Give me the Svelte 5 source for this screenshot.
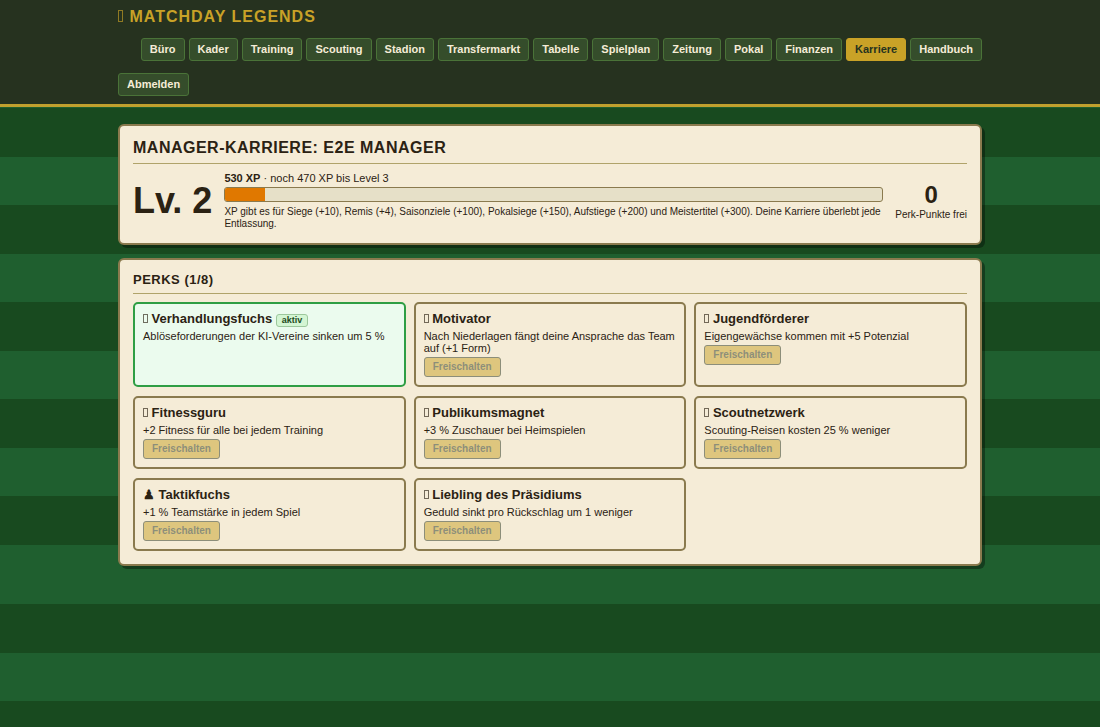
<script>
  const tabs = [
    'Büro', 'Kader', 'Training', 'Scouting', 'Stadion', 'Transfermarkt', 'Tabelle',
    'Spielplan', 'Zeitung', 'Pokal', 'Finanzen', 'Karriere', 'Handbuch'
  ];
  let active = $state('Karriere');

  const xp = { total: 530, missing: 470, next: 3, percent: 6 };

  const perks = [
    { name: 'Verhandlungsfuchs', text: 'Ablöseforderungen der KI-Vereine sinken um 5 %', owned: true },
    { name: 'Motivator', text: 'Nach Niederlagen fängt deine Ansprache das Team auf (+1 Form)' },
    { name: 'Jugendförderer', text: 'Eigengewächse kommen mit +5 Potenzial' },
    { name: 'Fitnessguru', text: '+2 Fitness für alle bei jedem Training' },
    { name: 'Publikumsmagnet', text: '+3 % Zuschauer bei Heimspielen' },
    { name: 'Scoutnetzwerk', text: 'Scouting-Reisen kosten 25 % weniger' },
    { icon: '♟', name: 'Taktikfuchs', text: '+1 % Teamstärke in jedem Spiel' },
    { name: 'Liebling des Präsidiums', text: 'Geduld sinkt pro Rückschlag um 1 weniger' }
  ];
</script>

<header>
  <div class="bar">
    <div class="brand"><span class="box" aria-hidden="true"></span> Matchday Legends</div>
    <nav>
      {#each tabs as tab}
        <button class="tab" class:active={tab === active} onclick={() => (active = tab)}>{tab}</button>
      {/each}
    </nav>
    <button class="tab">Abmelden</button>
  </div>
</header>

<main>
  <section class="card">
    <h1>Manager-Karriere: E2E Manager</h1>
    <div class="career">
      <div class="level">Lv. 2</div>
      <div class="progress">
        <div class="xp"><b>{xp.total} XP</b> · noch {xp.missing} XP bis Level {xp.next}</div>
        <div class="track"><div class="fill" style="width: {xp.percent}%"></div></div>
        <div class="small">
          XP gibt es für Siege (+10), Remis (+4), Saisonziele (+100), Pokalsiege (+150), Aufstiege (+200) und Meistertitel (+300). Deine Karriere überlebt jede Entlassung.
        </div>
      </div>
      <div class="points">
        <div class="count">0</div>
        <div class="small">Perk-Punkte frei</div>
      </div>
    </div>
  </section>

  <section class="card">
    <h2>Perks (1/8)</h2>
    <div class="perks">
      {#each perks as perk}
        <article class="perk" class:owned={perk.owned}>
          <h3>
            {#if perk.icon}{perk.icon}{:else}<span class="box" aria-hidden="true"></span>{/if}
            {perk.name}
            {#if perk.owned}<span class="badge">aktiv</span>{/if}
          </h3>
          <p>{perk.text}</p>
          {#if !perk.owned}
            <button class="unlock" disabled>Freischalten</button>
          {/if}
        </article>
      {/each}
    </div>
  </section>
</main>

<style>
  :global(body) {
    margin: 0;
    background: repeating-linear-gradient(0deg, #1f5f2f 0 48px, #184a1f 48px 97px);
    color: #2b2213;
    font: 11px/12px "Liberation Sans", Arial, sans-serif;
  }
  header {
    background: #26321f;
    border-bottom: 3px solid #c0a02e;
    padding: 8px 16px;
  }
  .bar {
    max-width: 864px;
    margin: 0 auto;
    display: flex;
    flex-wrap: wrap;
    align-items: center;
    gap: 12px;
  }
  .brand {
    color: #c9a227;
    font-size: 16px;
    line-height: 18px;
    font-weight: bold;
    letter-spacing: 1px;
    text-transform: uppercase;
  }
  .box {
    display: inline-block;
    box-sizing: border-box;
    width: 5px;
    height: 9px;
    border: 1px solid;
    opacity: 0.65;
  }
  .brand .box {
    height: 12px;
    margin-right: 1px;
  }
  nav {
    display: flex;
    flex-wrap: wrap;
    gap: 4px;
    margin-left: auto;
  }
  button {
    font-family: inherit;
    font-weight: bold;
    border-radius: 3px;
  }
  .tab {
    padding: 4px 8px;
    border: 1px solid #4a7338;
    background: #354d2b;
    color: #f5ecd7;
    font-size: 11px;
    line-height: 13px;
    cursor: pointer;
  }
  .tab.active {
    background: #c9a227;
    border-color: #c9a227;
    color: #26321f;
  }
  main {
    max-width: 864px;
    margin: 0 auto;
    padding: 17px 16px 27px;
    display: grid;
    gap: 13px;
  }
  .card {
    background: #f5ecd7;
    border: 2px solid #8a7a4e;
    border-radius: 6px;
    box-shadow: 3px 3px 0 rgba(0, 0, 0, 0.35);
    padding: 13px;
  }
  h1, h2 {
    margin: 0 0 8px;
    border-bottom: 1px solid #b0a36a;
    padding-bottom: 6px;
    letter-spacing: 0.5px;
    text-transform: uppercase;
  }
  h1 {
    font-size: 16px;
    line-height: 18px;
  }
  h2 {
    font-size: 13px;
    line-height: 14px;
  }
  .career {
    display: flex;
    align-items: center;
    gap: 12px;
  }
  .level {
    font-size: 36px;
    line-height: 40px;
    font-weight: bold;
    white-space: nowrap;
  }
  .progress {
    flex: 1;
  }
  .track {
    height: 13px;
    margin: 3px 0 4px;
    border: 1px solid #8a7a4e;
    border-radius: 3px;
    background: #e6e0c8;
    overflow: hidden;
  }
  .fill {
    height: 100%;
    background: #e07800;
  }
  .small {
    font-size: 10px;
    line-height: 12px;
  }
  .points {
    text-align: center;
  }
  .count {
    font-size: 24px;
    line-height: 28px;
    font-weight: bold;
  }
  .perks {
    display: grid;
    grid-template-columns: repeat(auto-fill, minmax(240px, 1fr));
    gap: 9px 8px;
  }
  .perk {
    border: 2px solid #8a7a4e;
    border-radius: 5px;
    padding: 8px;
  }
  .perk.owned {
    border-color: #2f9e44;
    background: #ebfbee;
  }
  h3 {
    margin: 0;
    font-size: 13px;
    line-height: 14px;
  }
  .badge {
    display: inline-block;
    padding: 0 5px;
    border: 1px solid #9cc79c;
    border-radius: 3px;
    background: #d3f5d3;
    color: #1d4a20;
    font-size: 9px;
    line-height: 11px;
    margin-bottom: -2px;
  }
  p {
    margin: 4px 0 3px;
  }
  .unlock {
    display: block;
    padding: 3px 8px;
    border: 1px solid #26321f;
    background: #c9a227;
    color: #26321f;
    font-size: 10px;
    line-height: 12px;
    opacity: 0.5;
  }
</style>
